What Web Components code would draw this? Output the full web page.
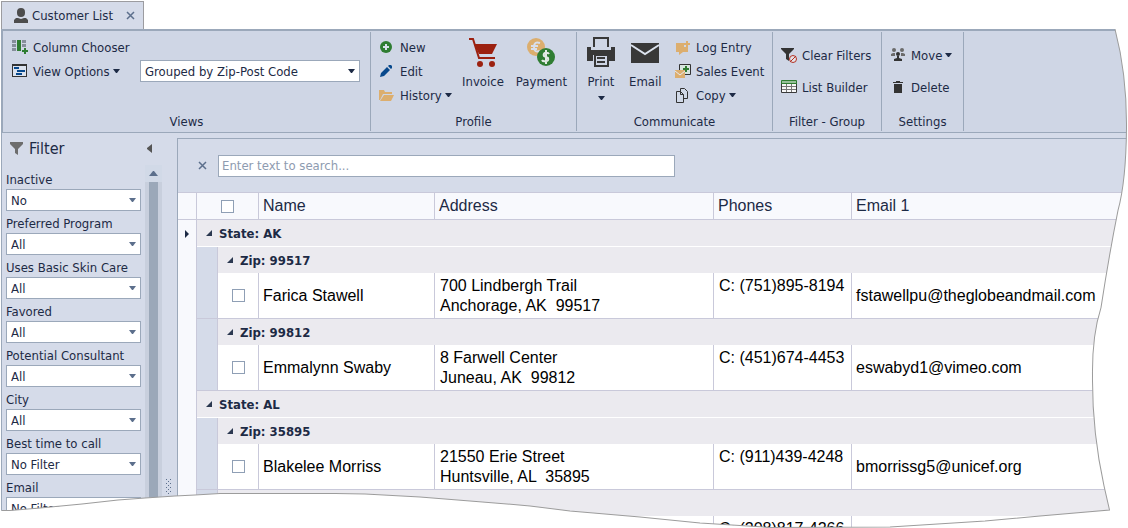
<!DOCTYPE html>
<html lang="en">
<head>
<meta charset="utf-8">
<title>Customer List</title>
<style>
  html, body {
    margin: 0;
    height: 100%;
    overflow: hidden;
    background: #fff;
  }
</style>
</head>
<body>
<customer-app></customer-app>

<script>
const icons = {
  person: '<path fill="#4d4d4d" d="M4 4a4 4 0 0 1 8 0v1a4 4 0 0 1-8 0zM1 15v-3l2-2h2l3 1 3-1h2l2 2v3z"/>',
  columns: '<path fill="#868e9b" d="M0 1h4v3H0zM0 5h4v3H0zM0 9h4v3H0zM10 1h4v3h-4zM10 5h4v3h-4z"/><path fill="#2f7d32" d="M5 1h4v11H5zM12 9h2v2h2v2h-2v2h-2v-2h-2v-2h2z"/>',
  viewOptions: '<path fill="#333" d="M0 1h15v13H0z"/><path fill="#dce3ee" d="M1 3h13v10H1z"/><path fill="#07488c" d="M2 4h5v2H2zM5 7h8v2H5zM4 10h6v2H4z"/>',
  add: '<circle cx="7" cy="8" r="6" fill="#2f7d32"/><path fill="#d8e0ec" d="M6 5h2v2h2v2H8v2H6V9H4V7h2z"/>',
  edit: '<path fill="#07488c" d="M1 14l1-4 6-6 3 3-6 6zM9 3l1-1h2l1 1v2l-1 1z"/>',
  folder: '<path fill="#dcae6e" d="M0 3h5l1 2h7v2H4l-3 6H0zM5 8h10l-3 6H1z"/>',
  cart: '<path fill="none" stroke="#9c2110" stroke-width="2" d="M2 3h4l6 19h16"/><path fill="#9c2110" d="M7 8h23l-5 10H12z"/><circle cx="13" cy="28" r="3" fill="#9c2110"/><circle cx="25" cy="28" r="3" fill="#9c2110"/>',
  coins: '<circle cx="11" cy="11" r="9" fill="#dcae6e"/><path fill="none" stroke="#d8dfec" stroke-width="2" d="M15 7q-6-2-6 4t6 4M6 10h7M6 13h6"/><circle cx="21" cy="21" r="9" fill="#2f7d32"/><path fill="none" stroke="#e2eae4" stroke-width="2" d="M24 18q-1-2-4-1-2 1-1 3l4 2q1 3-2 3-3 1-4-1M21 14v14"/>',
  printer: '<path fill="none" stroke="#383838" stroke-width="2" d="M9 11V2h14v9"/><path fill="#383838" d="M2 11h4v3h20v-3h4v14h-6v-6H8v6H2z"/><path fill="none" stroke="#383838" stroke-width="2" d="M10 19h13v11H10zM12 22h8M12 26h8"/>',
  mail: '<path fill="#383838" d="M2 7h28v20H2z"/><path fill="none" stroke="#dce3ee" stroke-width="2" d="M2 9l14 9 14-9"/>',
  log: '<path fill="#dcae6e" d="M1 4h8v4h4v5H8l-4 3v-3H1zM11 2h2v2h2v2h-2v2h-2V6H9V4h2z"/>',
  sales: '<path fill="#d6e5de" stroke="#333" d="M4.500 1.500h11v10h-11z"/><path fill="#2f7d32" d="M10 3h2v2h2v2h-2v2h-2V7H8V5h2z"/><path fill="#dcae6e" d="M0 7h10v8H0z"/><path fill="none" stroke="#e8eaf0" d="M0 8l5 4 5-4"/>',
  copy: '<path fill="#d1d9e7" stroke="#333" d="M5.500 1.500h4l3 3v7h-7z"/><path fill="#d1d9e7" stroke="#333" d="M1.500 4.500h4l3 3v8h-7zM5.500 4.500v3h3"/>',
  clearFilters: '<path fill="#333" d="M0 1h13v1L8 7v7l-3-2V7L0 2z"/><circle cx="12" cy="12" r="3.500" fill="#e4e4ea" stroke="#b33224"/><path stroke="#b33224" d="M9 15l6-6"/>',
  list: '<path fill="#f7f7f7" stroke="#3a3a3a" d="M.5 2.500h15v11H.5z"/><path fill="#96bf99" stroke="#2f7d32" d="M.5 1.500h15v3H.5z"/><path fill="none" stroke="#777" d="M1 7.500h14M1 10.500h14M5.500 5v8M10.500 5v8"/>',
  people: '<g fill="#6b6b6b"><circle cx="4" cy="3" r="2"/><circle cx="12" cy="3" r="2"/><path d="M1 9V7l2-1h2v3zM15 9V7l-2-1h-2v3z"/></g><g fill="#333"><circle cx="8" cy="7" r="2"/><path d="M4 14v-2l3-1V9h2v2l3 1v2z"/></g>',
  trash: '<path fill="#333" d="M3 3h3V2h4v1h3v1H3zM4 5h8v9H4z"/>',
  funnel: '<path fill="#6d6d6d" d="M2 2h13v2l-5 5v6l-3-2V9L2 4z"/>',
};

const base = `
  * {
    box-sizing: border-box;
  }
  :host([hidden]) {
    display: none;
  }
  button {
    border: 0;
    padding: 0;
    background: none;
    font: inherit;
    color: inherit;
    cursor: pointer;
  }
`;

function svg(name, size) {
  const box = size > 20 ? 32 : 16;
  return `<svg width="${size}" height="${size}" viewBox="0 0 ${box} ${box}" aria-hidden="true">${icons[name]}</svg>`;
}

const caret = '<svg class="caret" width="7" height="4" viewBox="0 0 7 4" aria-hidden="true"><path fill="currentColor" d="M0 0h7L4 4H3z"/></svg>';
const cross = '<svg width="9" height="9" viewBox="0 0 9 9" aria-hidden="true"><path stroke="#5c6f8c" stroke-width="1.500" d="M1 1l7 7M8 1l-7 7"/></svg>';

class RibbonButton extends HTMLElement {
  connectedCallback() {
    const large = this.hasAttribute('large');
    const shadow = this.attachShadow({ mode: 'open' });
    shadow.innerHTML = `
      <style>
        ${base}
        :host { display: block; }
        button {
          display: flex;
          align-items: center;
          height: 24px;
          white-space: nowrap;
        }
        svg { flex: none; }
        .label { margin-left: 5px; }
        .caret { margin-left: 3px; }
        .large {
          flex-direction: column;
          height: 72px;
          padding: 1px 6px 0;
        }
        .large .label { margin: 4px 0 0; line-height: 20px; }
        .large .caret { margin: 4px 0 0; }
      </style>
      <button type="button" class="${large ? 'large' : ''}">
        ${svg(this.getAttribute('icon'), large ? 32 : 16)}
        <span class="label"><slot></slot></span>
        ${this.hasAttribute('menu') ? caret : ''}
      </button>
    `;
  }
}

class RibbonGroup extends HTMLElement {
  connectedCallback() {
    const shadow = this.attachShadow({ mode: 'open' });
    shadow.innerHTML = `
      <style>
        ${base}
        :host {
          display: flex;
          flex-direction: column;
          flex: none;
          margin: 1px 0;
          border-right: 1px solid #9ba8ba;
        }
        .content {
          display: flex;
          height: 72px;
          margin-top: 3px;
          padding: 0 3px 0 var(--indent, 8px);
        }
        .caption {
          margin-top: 6px;
          line-height: 18px;
          text-align: center;
        }
      </style>
      <div class="content"><slot></slot></div>
      <div class="caption">${this.getAttribute('caption')}</div>
    `;
  }
}

class DropDown extends HTMLElement {
  connectedCallback() {
    const shadow = this.attachShadow({ mode: 'open' });
    const label = this.getAttribute('label');
    shadow.innerHTML = `
      <style>
        ${base}
        :host { display: block; }
        label {
          display: block;
          line-height: 18px;
        }
        .field {
          display: grid;
          align-items: center;
        }
        .field > * { grid-area: 1 / 1; }
        select {
          appearance: none;
          width: 100%;
          height: 22px;
          margin: 0;
          padding: 0 20px 0 4px;
          border: 1px solid #9ba8ba;
          border-radius: 0;
          background: #fff;
          color: inherit;
          font: inherit;
        }
        .caret {
          justify-self: end;
          margin-right: 5px;
          color: var(--caret, #5c6f8c);
          pointer-events: none;
        }
      </style>
      ${label ? `<label for="choice">${label}</label>` : ''}
      <div class="field">
        <select id="choice" ${label ? '' : 'aria-label="View"'}><option>${this.getAttribute('value')}</option></select>
        ${caret}
      </div>
    `;
  }
}

class AppRibbon extends HTMLElement {
  connectedCallback() {
    const shadow = this.attachShadow({ mode: 'open' });
    shadow.innerHTML = `
      <style>
        ${base}
        :host {
          display: flex;
          height: 104px;
          border: solid #9ba8ba;
          border-width: 2px 0 1px 2px;
          background: #cfd6e5;
        }
        .views {
          --indent: 9px;
          width: 368px;
        }
        .profile { width: 206px; }
        .communicate {
          --indent: 2px;
          width: 196px;
        }
        .filters { width: 109px; }
        .settings { width: 82px; }
        .stack {
          display: flex;
          flex-direction: column;
          flex: none;
        }
        .spread {
          justify-content: center;
          gap: 8px;
        }
        .push { margin-left: auto; }
        .views .stack { width: 116px; }
        .communicate .stack { width: 94px; }
        .views drop-down {
          --caret: #1d2a45;
          flex: 1;
          margin: 25px 7px 0 12px;
        }
      </style>
      <ribbon-group class="views" caption="Views">
        <div class="stack">
          <ribbon-button icon="columns">Column Chooser</ribbon-button>
          <ribbon-button icon="viewOptions" menu>View Options</ribbon-button>
        </div>
        <drop-down value="Grouped by Zip-Post Code"></drop-down>
      </ribbon-group>
      <ribbon-group class="profile" caption="Profile">
        <div class="stack">
          <ribbon-button icon="add">New</ribbon-button>
          <ribbon-button icon="edit">Edit</ribbon-button>
          <ribbon-button icon="folder" menu>History</ribbon-button>
        </div>
        <ribbon-button class="push" icon="cart" large>Invoice</ribbon-button>
        <ribbon-button icon="coins" large>Payment</ribbon-button>
      </ribbon-group>
      <ribbon-group class="communicate" caption="Communicate">
        <ribbon-button icon="printer" large menu>Print</ribbon-button>
        <ribbon-button icon="mail" large>Email</ribbon-button>
        <div class="stack push">
          <ribbon-button icon="log">Log Entry</ribbon-button>
          <ribbon-button icon="sales">Sales Event</ribbon-button>
          <ribbon-button icon="copy" menu>Copy</ribbon-button>
        </div>
      </ribbon-group>
      <ribbon-group class="filters" caption="Filter - Group">
        <div class="stack spread">
          <ribbon-button icon="clearFilters">Clear Filters</ribbon-button>
          <ribbon-button icon="list">List Builder</ribbon-button>
        </div>
      </ribbon-group>
      <ribbon-group class="settings" caption="Settings">
        <div class="stack spread">
          <ribbon-button icon="people" menu>Move</ribbon-button>
          <ribbon-button icon="trash">Delete</ribbon-button>
        </div>
      </ribbon-group>
    `;
  }
}

class FilterPanel extends HTMLElement {
  connectedCallback() {
    const filters = [
      ['Inactive', 'No'],
      ['Preferred Program', 'All'],
      ['Uses Basic Skin Care', 'All'],
      ['Favored', 'All'],
      ['Potential Consultant', 'All'],
      ['City', 'All'],
      ['Best time to call', 'No Filter'],
      ['Email', 'No Filter'],
    ];
    const shadow = this.attachShadow({ mode: 'open' });
    shadow.innerHTML = `
      <style>
        ${base}
        :host {
          display: flex;
          flex-direction: column;
          overflow: hidden;
        }
        .head {
          display: flex;
          flex: none;
          align-items: center;
          height: 30px;
          padding: 0 10px 0 6px;
        }
        h2 {
          flex: 1;
          margin: 0 0 0 5px;
          font-size: 16px;
          font-weight: normal;
        }
        .body {
          display: flex;
          flex: 1;
          min-height: 0;
          margin-top: 2px;
        }
        .fields {
          display: flex;
          flex-direction: column;
          flex: 1;
          gap: 4px;
          padding: 6px 4px 0;
          overflow: hidden;
        }
        .scroll {
          display: flex;
          flex-direction: column;
          width: 17px;
          background: #c8cfdd;
        }
        .up {
          display: flex;
          align-items: center;
          justify-content: center;
          height: 17px;
          background: #d1d9e7;
        }
        .thumb {
          flex: 1;
          margin: 0 4px;
          background: #9ba8b9;
        }
      </style>
      <div class="head">
        ${svg('funnel', 16)}
        <h2>Filter</h2>
        <button type="button" aria-label="Collapse">
          <svg width="5" height="9" viewBox="0 0 5 9"><path fill="#555" d="M5 0v9L0 5V4z"/></svg>
        </button>
      </div>
      <div class="body">
        <div class="fields">
          ${filters.map(([label, value]) => `<drop-down label="${label}" value="${value}"></drop-down>`).join('')}
        </div>
        <div class="scroll">
          <div class="up"><svg width="9" height="5" viewBox="0 0 9 5"><path fill="#5c6f8c" d="M4 0h1l4 5H0z"/></svg></div>
          <div class="thumb"></div>
        </div>
      </div>
    `;
  }
}

class CustomerGrid extends HTMLElement {
  constructor() {
    super();
    this.rows = [
      { state: 'AK' },
      { zip: '99517' },
      { name: 'Farica Stawell', address: '700 Lindbergh Trail\nAnchorage, AK  99517', phone: '(751)895-8194', email: 'fstawellpu@theglobeandmail.com' },
      { zip: '99812' },
      { name: 'Emmalynn Swaby', address: '8 Farwell Center\nJuneau, AK  99812', phone: '(451)674-4453', email: 'eswabyd1@vimeo.com' },
      { state: 'AL' },
      { zip: '35895' },
      { name: 'Blakelee Morriss', address: '21550 Erie Street\nHuntsville, AL  35895', phone: '(911)439-4248', email: 'bmorrissg5@unicef.org' },
      { zip: '' },
      { name: '', address: '', phone: '(208)817-4266', email: '' },
    ];
  }

  connectedCallback() {
    const shadow = this.attachShadow({ mode: 'open' });
    shadow.innerHTML = `
      <style>
        ${base}
        :host {
          display: block;
          overflow: hidden;
          font: 16px/20px "Liberation Sans", Arial, sans-serif;
        }
        table {
          width: 100%;
          table-layout: fixed;
          border-collapse: separate;
          border-spacing: 0;
          background: #fff;
        }
        td, th {
          padding: 0 0 0 4px;
          border: 0 solid #c9c9da;
          text-align: left;
          font-weight: normal;
          white-space: pre;
        }
        th {
          height: 28px;
          border-width: 1px 1px 1px 0;
          background: #f8f9fd;
        }
        th:last-child, td:last-child { border-right: 0; }
        .mark {
          padding: 0;
          border-right-width: 1px;
          background: #f8f9fd;
          text-align: center;
        }
        .mark svg { display: block; margin: auto; }
        .indent {
          padding: 0;
          border-right-width: 1px;
          background: #d5dbe9;
        }
        .group {
          height: 26px;
          padding-left: 9px;
          background: #ebeaef;
          font: bold 13px "DejaVu Sans Condensed", "DejaVu Sans", sans-serif;
        }
        .group div {
          display: flex;
          align-items: center;
          gap: 7px;
        }
        .state .group {
          height: 27px;
          border-bottom: 1px solid #fff;
        }
        .data td { height: 46px; border-right-width: 1px; color: #000; }
        .data td:last-child { border-right: 0; }
        .data td:not(.mark) { border-bottom-width: 1px; }
        .data .wide { padding-left: 5px; }
        .data .phone { padding-top: 3px; vertical-align: top; }
        .data .check, .check { text-align: center; padding: 0; }
        input {
          appearance: none;
          display: block;
          width: 13px;
          height: 13px;
          margin: auto;
          border: 1px solid #8f9fb5;
          background: #fff;
        }
        .c-mark { width: 19px; }
        .c-indent { width: 21px; }
        .c-check { width: 41px; }
        .c-name { width: 176px; }
        .c-address { width: 279px; }
        .c-phone { width: 138px; }
      </style>
      <table>
        <colgroup>
          <col class="c-mark"><col class="c-indent"><col class="c-check">
          <col class="c-name"><col class="c-address"><col class="c-phone"><col>
        </colgroup>
        <thead>
          <tr>
            <th class="mark"></th>
            <th class="check" colspan="2"><input type="checkbox" aria-label="Select all"></th>
            <th>Name</th><th>Address</th><th>Phones</th><th>Email 1</th>
          </tr>
        </thead>
        <tbody>${this.rows.map((row, i) => this.drawRow(row, i)).join('')}</tbody>
      </table>
    `;
  }

  drawRow(row, i) {
    const arrow = '<svg width="6" height="6" viewBox="0 0 6 6"><path fill="#2b3850" d="M6 0v6H0z"/></svg>';
    const current = '<svg width="4" height="8" viewBox="0 0 4 8"><path fill="#1d2a45" d="M0 0l4 4-4 4z"/></svg>';
    const mark = `<td class="mark">${i === 0 ? current : ''}</td>`;
    if ('state' in row) {
      return `<tr class="state">${mark}<td class="group" colspan="6"><div>${arrow}State: ${row.state}</div></td></tr>`;
    }
    if ('zip' in row) {
      const title = row.zip ? `<div>${arrow}Zip: ${row.zip}</div>` : '';
      return `<tr>${mark}<td class="indent"></td><td class="group" colspan="5">${title}</td></tr>`;
    }
    return `<tr class="data">${mark}<td class="indent"></td>` +
      `<td class="check"><input type="checkbox" aria-label="Select ${row.name}"></td>` +
      `<td>${row.name}</td><td class="wide">${row.address}</td>` +
      `<td class="wide phone">C: ${row.phone}</td><td>${row.email}</td></tr>`;
  }
}

// white paper edge that cuts off the right and bottom sides of the window
class TornEdge extends HTMLElement {
  connectedCallback() {
    const edge = 'M1115 29Q1127 75 1126.500 128T1118 210Q1109 255 1101 307Q1092 335 1092.500 375Q1092 430 1104 485L1109.500 509L1040 515L985 520L890 526L770 526.500L700 522L640 516L570 510L530 505L470 500L420 496L365 493L335 492.500H220L195 494L175 495L145 497L118 499L82 503L40 507L10 509.500H1.500';
    const shadow = this.attachShadow({ mode: 'open' });
    shadow.innerHTML = `
      <style>
        :host {
          display: block;
          position: absolute;
          inset: 0;
          pointer-events: none;
        }
        svg { display: block; width: 100%; height: 100%; }
      </style>
      <svg viewBox="0 0 1128 528" preserveAspectRatio="none" aria-hidden="true">
        <path fill="#fff" d="${edge}L0 510V528H1128V0H1115z"/>
        <path fill="none" stroke="#9c9c9c" d="${edge}"/>
      </svg>
    `;
  }
}

class CustomerApp extends HTMLElement {
  connectedCallback() {
    const shadow = this.attachShadow({ mode: 'open' });
    shadow.innerHTML = `
      <style>
        ${base}
        :host {
          display: flex;
          flex-direction: column;
          position: relative;
          height: 100vh;
          padding: 1px 0 0 1px;
          overflow: hidden;
          color: #1d2a45;
          font: 13px "DejaVu Sans Condensed", "DejaVu Sans", sans-serif;
        }
        .tab {
          display: flex;
          flex: none;
          align-self: flex-start;
          align-items: center;
          height: 28px;
          padding: 0 8px 0 11px;
          border: 1px solid #9c9ca0;
          border-bottom: 0;
          background: #d5dbe9;
        }
        .tab .title { margin: 0 13px 0 3px; }
        .tab button, .search button { display: flex; }
        app-ribbon { flex: none; }
        .work {
          display: flex;
          flex: 1;
          min-height: 0;
          border-left: 1px solid #9ba8ba;
          background: #d5dbe9;
        }
        filter-panel { flex: none; width: 160px; }
        .splitter {
          flex: none;
          width: 15px;
          padding: 346px 0 0 4px;
        }
        .splitter svg { display: block; }
        main {
          flex: 1;
          min-width: 0;
          margin-top: 5px;
          border: solid #9ba8ba;
          border-width: 1px 0 0 1px;
        }
        .search {
          display: flex;
          align-items: center;
          gap: 11px;
          height: 53px;
          padding-left: 20px;
        }
        .search input {
          flex: 0 1 457px;
          min-width: 0;
          height: 22px;
          padding: 0 3px;
          border: 1px solid #9ba8ba;
          background: #fff;
          font: inherit;
        }
        .search input::placeholder { color: #8e9bb0; opacity: 1; }
      </style>
      <div class="tab">
        ${svg('person', 16)}
        <span class="title">Customer List</span>
        <button type="button" aria-label="Close">${cross}</button>
      </div>
      <app-ribbon></app-ribbon>
      <div class="work">
        <filter-panel></filter-panel>
        <div class="splitter">
          <svg width="5" height="15" viewBox="0 0 5 15"><path stroke="#5c6f8c" stroke-dasharray="1 3" d="M.5 0v15M4.500 0v15"/><path stroke="#5c6f8c" stroke-dasharray="1 3" d="M2.500 2v13"/></svg>
        </div>
        <main>
          <div class="search">
            <button type="button" aria-label="Clear search">${cross}</button>
            <input type="text" placeholder="Enter text to search..." aria-label="Search">
          </div>
          <customer-grid></customer-grid>
        </main>
      </div>
      <torn-edge></torn-edge>
    `;
  }
}

customElements.define('ribbon-button', RibbonButton);
customElements.define('ribbon-group', RibbonGroup);
customElements.define('drop-down', DropDown);
customElements.define('app-ribbon', AppRibbon);
customElements.define('filter-panel', FilterPanel);
customElements.define('customer-grid', CustomerGrid);
customElements.define('torn-edge', TornEdge);
customElements.define('customer-app', CustomerApp);
</script>
</body>
</html>
